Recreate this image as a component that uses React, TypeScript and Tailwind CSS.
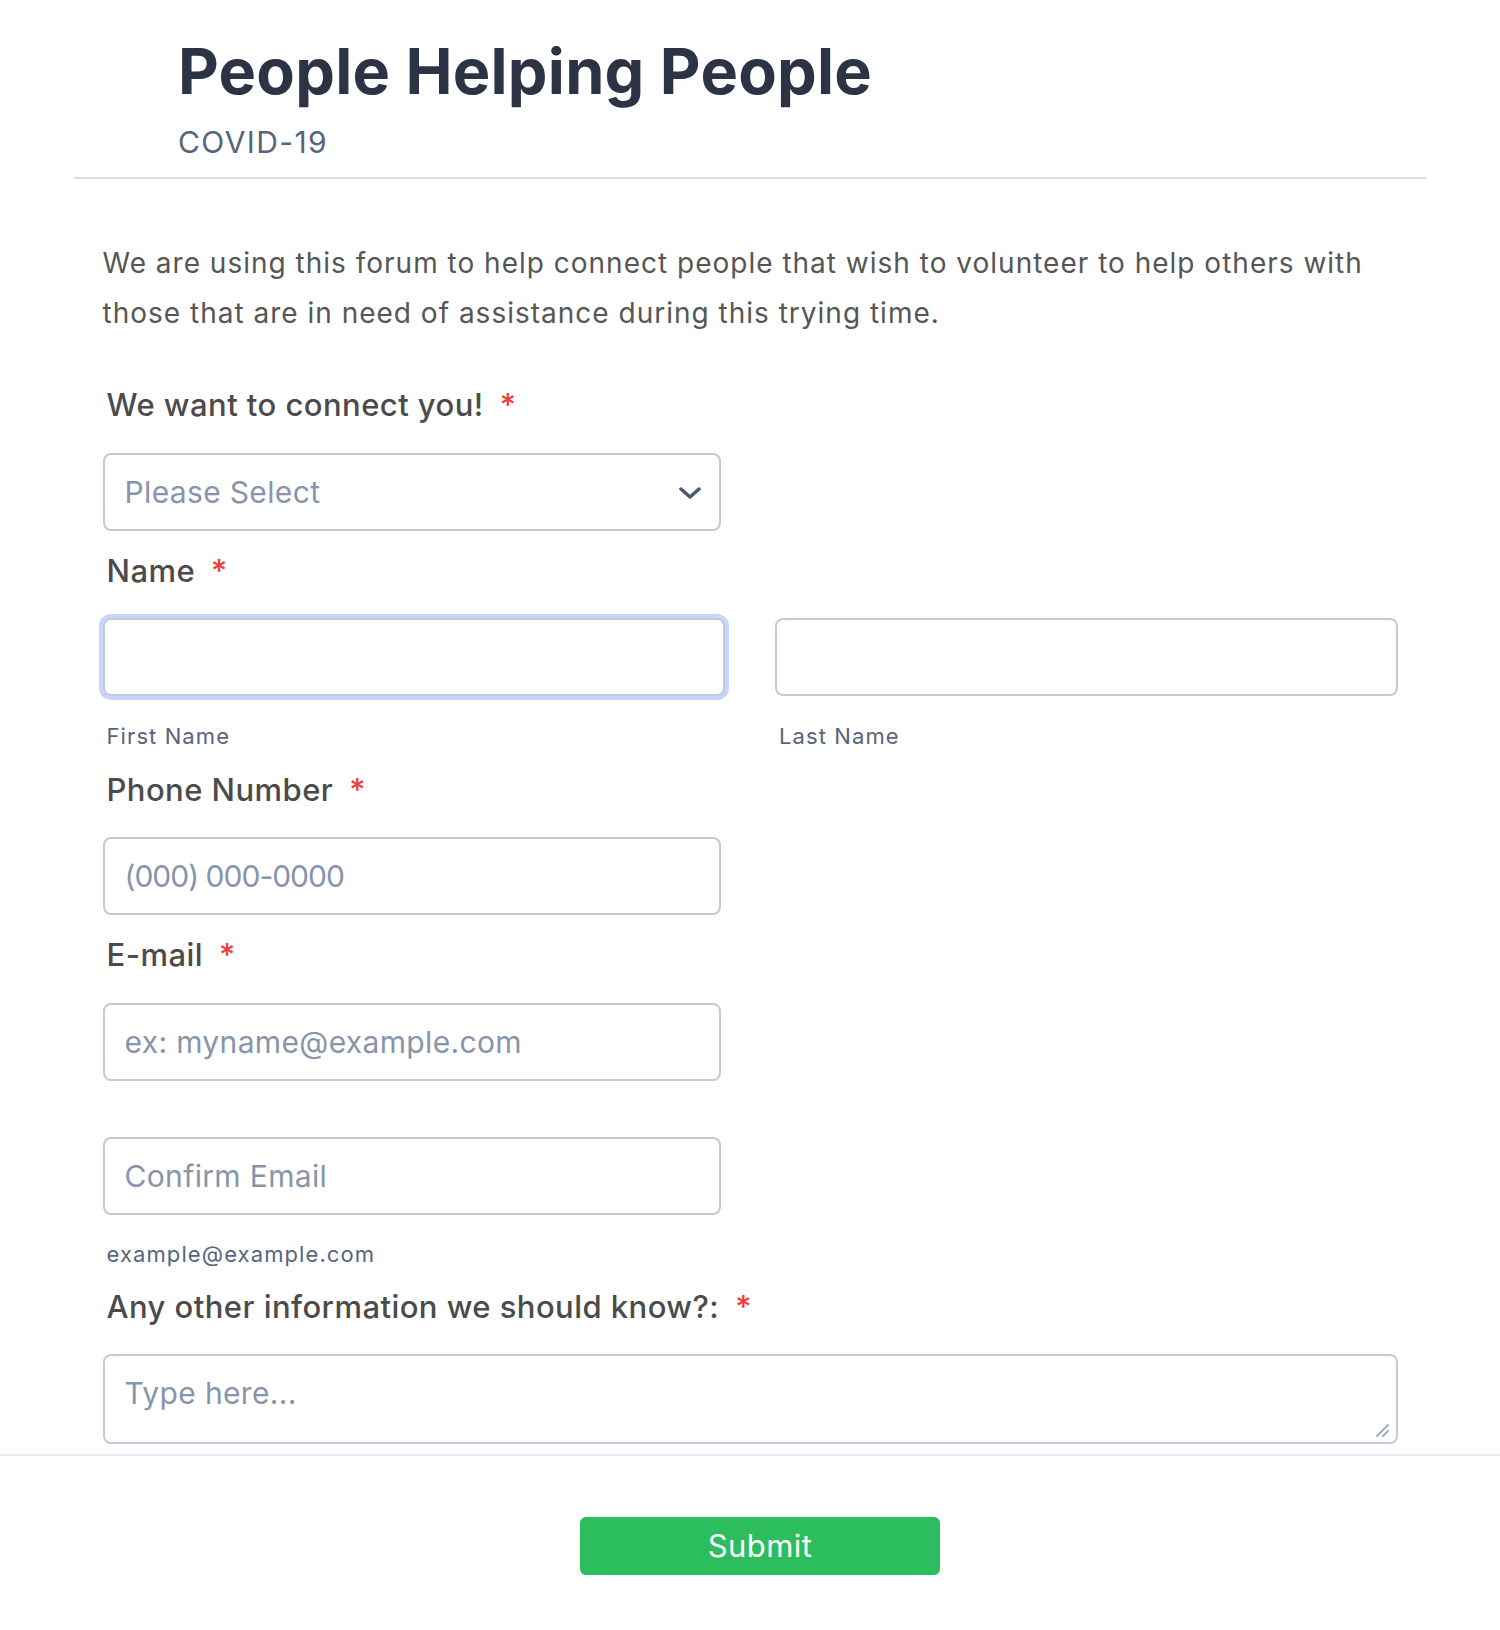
import React from "react";

const Required = () => <span className="ml-[16px] tracking-normal text-[#f23a3c]">*</span>;

const FieldLabel = ({ children, className = "" }: { children: React.ReactNode; className?: string }) => (
  <label
    className={`block pl-[4px] text-[31px] leading-[40px] font-medium tracking-[0.45px] text-[#4b4b4b] ${className}`}
  >
    {children}
    <Required />
  </label>
);

const SubLabel = ({ children, className = "" }: { children: React.ReactNode; className?: string }) => (
  <div className={`pl-[4px] text-[22px] leading-[30px] tracking-[1.1px] text-[#57647e] ${className}`}>{children}</div>
);

const fieldBox =
  "block h-[78px] rounded-[8px] border-2 border-[#c3cad8] bg-white px-[20px] text-[30px] text-[#2c3345] outline-none placeholder:text-[#8894ab]";
const inputBase = `${fieldBox} tracking-[0.35px]`;

export default function App() {
  return (
    <div className="min-h-[1630px] w-full bg-white font-['Inter',sans-serif]">
      {/* header */}
      <div className="mx-auto w-[1352px] border-b-2 border-[#d8dbe5] pl-[104px] pt-[40px] pb-[20px]">
        <h1 className="text-[63px] leading-[63px] font-bold tracking-[0.25px] text-[#2c3345]">People Helping People</h1>
        <div className="mt-[24px] text-[30px] leading-[30px] tracking-[1.4px] text-[#57647e]">COVID-19</div>
      </div>

      <form className="mx-auto w-[1295px]" onSubmit={(e) => e.preventDefault()}>
        <p className="mt-[59px] text-[28px] leading-[50px] tracking-[1px] text-[#565656]">
          We are using this forum to help connect people that wish to volunteer to help others with those that
          are in need of assistance during this trying time.
        </p>

        <FieldLabel className="mt-[47px]">We want to connect you!</FieldLabel>
        <div className="relative mt-[28px] w-[618px]">
          <select defaultValue="" className={`${inputBase} w-full appearance-none text-[#8894ab]`}>
            <option value="">Please Select</option>
            <option>I need help</option>
            <option>I want to volunteer</option>
          </select>
          <svg
            className="pointer-events-none absolute right-[20px] top-[34px]"
            width="22"
            height="12"
            viewBox="0 0 22 12"
            fill="none"
          >
            <path d="M2 2l9 8 9-8" stroke="#4e5a73" strokeWidth="3.5" strokeLinecap="round" strokeLinejoin="round" />
          </svg>
        </div>

        <FieldLabel className="mt-[20px]">Name</FieldLabel>
        <div className="mt-[27px] grid grid-cols-2 gap-[50px]">
          <div>
            <input type="text" className={`${inputBase} w-full border-[#9fb5f8] shadow-[0_0_0_4px_#c8d6fb]`} />
            <SubLabel className="mt-[25px]">First Name</SubLabel>
          </div>
          <div>
            <input type="text" className={`${inputBase} w-full`} />
            <SubLabel className="mt-[25px]">Last Name</SubLabel>
          </div>
        </div>

        <FieldLabel className="mt-[19px]">Phone Number</FieldLabel>
        <input
          type="tel"
          placeholder="(000) 000-0000"
          className={`${fieldBox} mt-[27px] w-[618px] tracking-[-1px]`}
        />

        <FieldLabel className="mt-[20px]">E-mail</FieldLabel>
        <input type="email" placeholder="ex: myname@example.com" className={`${inputBase} mt-[28px] w-[618px]`} />
        <input type="email" placeholder="Confirm Email" className={`${inputBase} mt-[56px] w-[618px]`} />
        <SubLabel className="mt-[24px]">example@example.com</SubLabel>

        <FieldLabel className="mt-[18px]">Any other information we should know?:</FieldLabel>
        <div className="relative mt-[27px]">
          <textarea
            placeholder="Type here..."
            className="block h-[90px] w-full resize-none rounded-[8px] border-2 border-[#c3cad8] bg-white px-[20px] pt-[17px] text-[30px] leading-[40px] tracking-[0.35px] text-[#2c3345] outline-none placeholder:text-[#8894ab]"
          />
          <svg className="pointer-events-none absolute right-[8px] bottom-[6px]" width="16" height="16" viewBox="0 0 16 16">
            <path d="M3 14L14 3M9 14l5-5" stroke="#a3abbd" strokeWidth="2" strokeLinecap="round" />
          </svg>
        </div>
      </form>

      <div className="mt-[10px] border-t-2 border-[#e6e9f1] pt-[61px]">
        <div className="flex justify-center pl-[20px]">
          <button
            type="submit"
            className="h-[58px] w-[360px] rounded-[6px] bg-[#2bbd5e] text-[31px] tracking-[0.4px] text-white"
          >
            Submit
          </button>
        </div>
      </div>
    </div>
  );
}
